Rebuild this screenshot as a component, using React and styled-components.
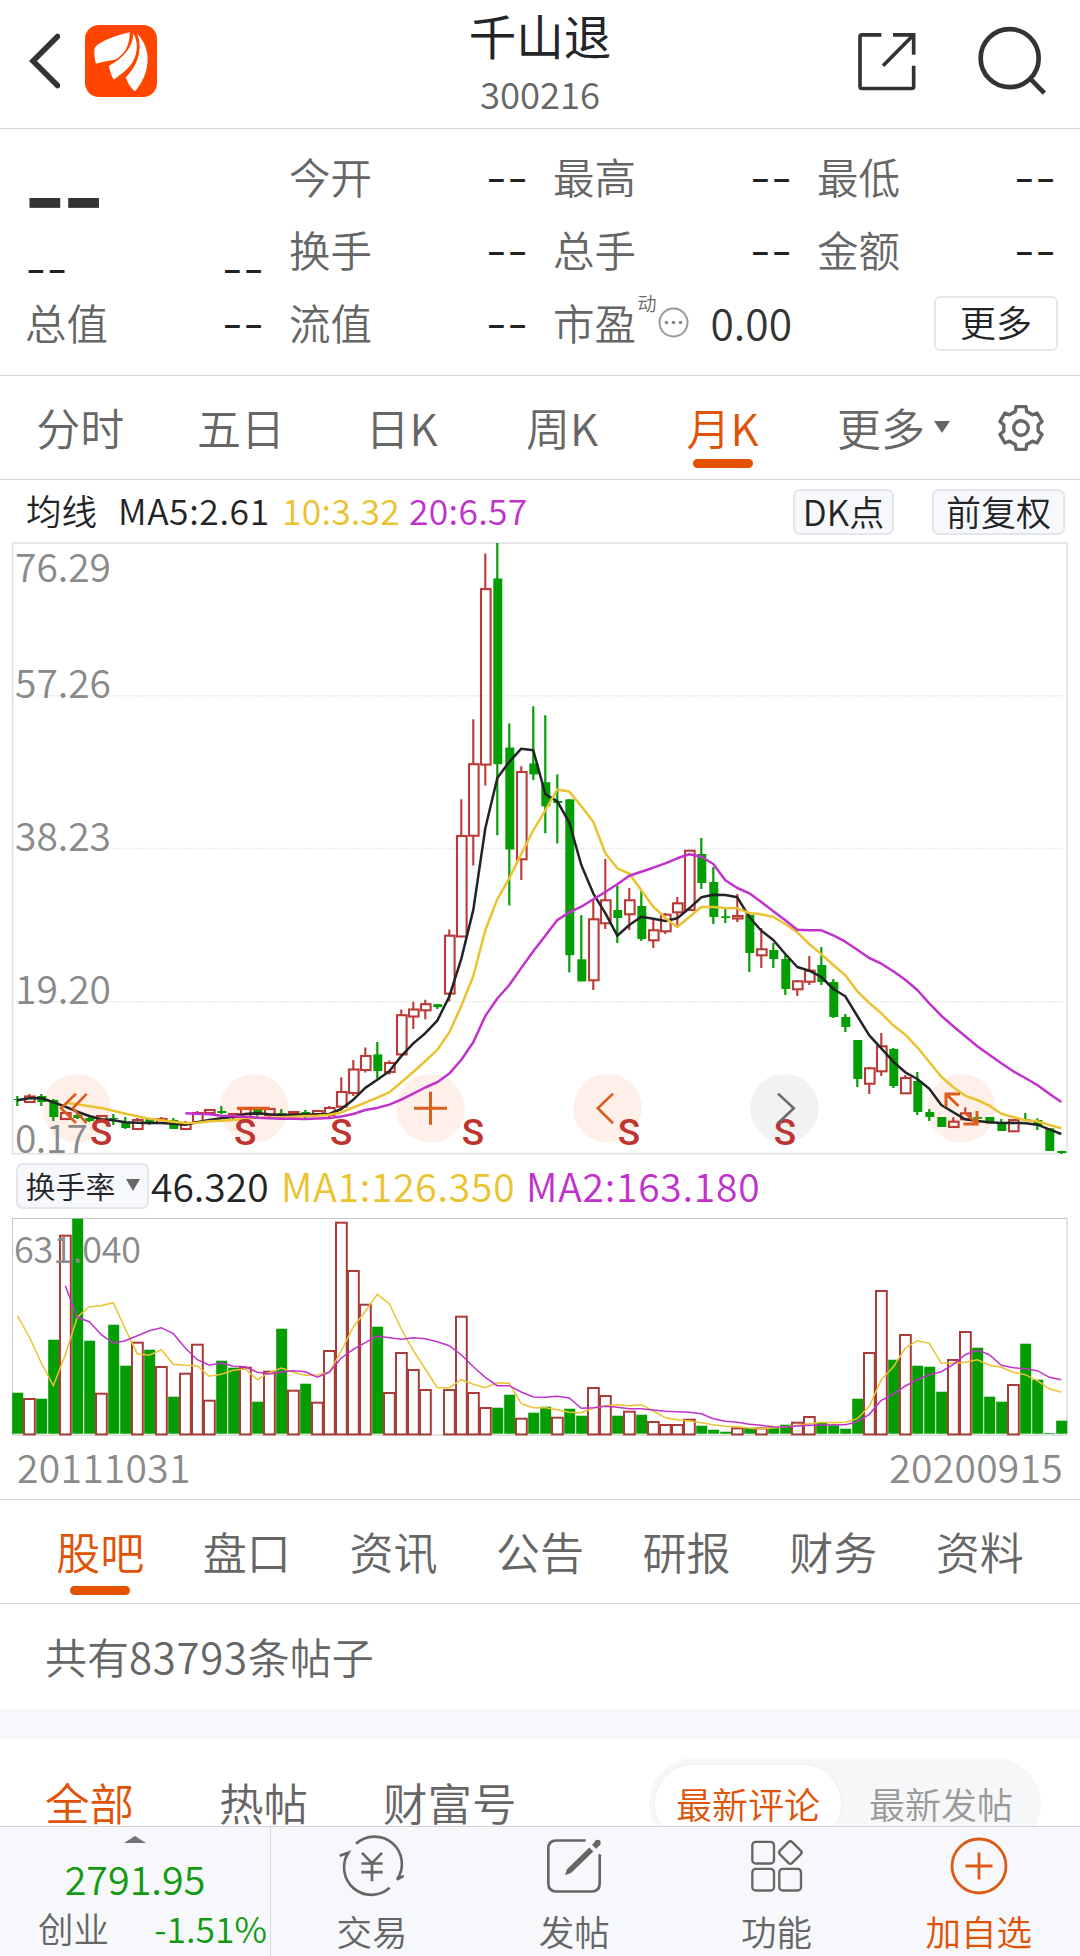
import React from 'react'
import styled, { createGlobalStyle } from 'styled-components'

const RED = '#b93a36'
const GREEN = '#049e04'
const ORANGE = '#e05206'
const INK = '#222426'
const GRAY = '#666'
const YELLOW = '#ebc22f'
const PURPLE = '#c032cb'

const STEP = 12

// [up, high, body top, body bottom, low] in chart pixels
const candles = [
    [0, 553, 556, 557, 563], [1, 551, 553.5, 559, 559], [0, 551, 553, 559, 563], [0, 556, 557, 574, 578],
    [1, 569, 570, 576, 577], [0, 571, 572, 575, 576], [0, 573, 575, 578, 579], [1, 572, 573, 578, 579],
    [0, 571, 575, 576, 582], [0, 574, 579, 585, 586], [1, 575, 577, 586, 586], [0, 575, 576, 580, 582],
    [1, 574, 576, 580, 581], [0, 575, 577, 586, 586], [1, 578, 580, 586, 587], [1, 568, 570, 579, 579],
    [1, 566, 567, 570, 570], [0, 563, 568, 570, 571], [1, 571, 571, 574, 576], [1, 564, 565, 574, 576],
    [0, 564, 566, 572, 576], [1, 565, 566, 572, 574], [0, 566, 570, 572, 572], [1, 569, 569, 571, 572],
    [0, 567, 569, 574, 575], [1, 568, 568, 571, 572], [1, 563, 565, 572, 574], [1, 534.3, 549, 563.7, 564],
    [1, 517, 526.5, 550, 553], [1, 504.5, 513, 527, 529.4], [0, 499, 511.4, 528, 535.5], [1, 517.5, 520, 529, 531.4],
    [1, 466.5, 472.2, 511.4, 511.4], [1, 458.8, 466.5, 473.5, 486], [1, 456.7, 461.2, 467.3, 476.3], [0, 461.2, 461.2, 464.1, 466],
    [1, 386.5, 392.7, 450.6, 458.4], [1, 256.3, 293, 393.5, 393.5], [1, 176.3, 221.2, 292.7, 322.4], [1, 10.6, 46.1, 221.6, 242.4],
    [0, 0, 35.5, 221.2, 292.2], [0, 180.4, 204.5, 306.5, 362.4], [1, 223.3, 229, 316.3, 337.1], [0, 163.3, 220.4, 231.4, 237.1],
    [0, 172.2, 239.2, 263.3, 290.2], [0, 231.4, 258, 260, 300.4], [0, 256.3, 256.3, 412.2, 429.4], [0, 372.2, 416.3, 438.4, 438.4],
    [1, 357, 376.3, 437.3, 447], [1, 316, 357.3, 380.3, 386], [0, 342.7, 367, 375, 400], [1, 345, 357.3, 371.3, 387],
    [0, 347, 363, 396, 398], [1, 377, 387.3, 397.3, 405], [1, 370, 371.7, 388.3, 391], [1, 354, 360.3, 369.3, 383.7],
    [1, 307.3, 307.7, 367, 367.7], [0, 295, 311, 340, 346], [0, 324, 339, 374, 381], [0, 366, 373.3, 375, 380],
    [1, 351, 373, 375.5, 379], [0, 370.3, 372, 410, 429], [1, 385, 406.3, 412.3, 425], [0, 400, 407, 416, 425],
    [0, 412, 416, 446, 452], [1, 437, 438.3, 446.3, 453], [1, 413, 427.7, 438.7, 442], [0, 404, 422, 439, 442],
    [0, 436, 439, 474, 475], [0, 471, 474, 484, 489], [0, 497, 497, 536, 544], [1, 524, 525.3, 540.7, 551],
    [1, 490, 503.3, 528.3, 533], [0, 505, 506, 543, 545], [1, 532, 535, 550.3, 550.7], [0, 529, 538, 569, 572],
    [0, 566, 569, 574, 578], [0, 574, 574, 584, 584], [1, 574.3, 578.7, 584, 584], [1, 564.3, 570.3, 576.3, 577],
    [0, 573.3, 574, 575.7, 577], [0, 574, 574, 580.3, 580.3], [0, 576, 580.3, 588, 588], [1, 576, 577, 588.3, 588.7],
    [0, 570, 576, 577.3, 578], [0, 575.3, 577, 582.3, 587], [0, 585.3, 585.3, 608, 608], [0, 607.7, 608, 610, 611],
]

const priceLines = [
    { color: INK, from: 0, ys: [557.3, 555.3, 555, 559.3, 563.7, 568.7, 573, 576.3, 577.3, 579.3, 579.7, 580, 580, 580.7, 581.7, 579.3, 577, 575.3, 573.7, 571, 570.3, 571.3, 572, 571.7, 571.4, 571.4, 571, 566, 556.7, 544.9, 536.7, 528.2, 513.1, 500.4, 490.2, 477.6, 453.5, 415.9, 366.9, 285.3, 235.1, 218.8, 205.7, 207.3, 251, 258.4, 279.6, 322, 350.6, 370.2, 392.7, 382, 373.7, 375.7, 378, 375.3, 365.3, 354.3, 351.7, 352, 354.3, 374, 387.7, 397, 411, 424, 427.7, 434, 446, 453.3, 473, 492.3, 505.3, 518.7, 529.3, 536, 545.7, 562, 569.3, 576.3, 578, 579.3, 580, 579.7, 580.3, 581.7, 586.3, 591] },
    { color: YELLOW, from: 4, ys: [559.7, 561.3, 563.3, 565, 567.7, 570.7, 573.3, 575.7, 577.3, 578.7, 580, 579.7, 578.3, 577.7, 577, 575.7, 574.7, 574.7, 574.3, 573.7, 573, 572.7, 571.8, 569.4, 564.5, 559.6, 554.7, 549.4, 539.2, 529, 518, 506.9, 489.4, 462.9, 433, 387.3, 356.3, 335.1, 311, 287.3, 267.3, 246.5, 248.6, 263.3, 278.8, 310.2, 325.3, 330.7, 347.3, 363.7, 375, 384, 374, 364, 364, 365, 365.3, 370, 371.3, 374, 381, 389.3, 401, 411.3, 422, 432.3, 448.3, 460, 470.3, 482.3, 491.7, 504.3, 519, 533.7, 544.3, 552.7, 557, 562.7, 570.7, 574, 577.3, 578.3, 582, 585.3] },
    { color: PURPLE, from: 14, ys: [570.3, 570.7, 571.3, 572.7, 573, 573.7, 574.7, 575.3, 575.7, 575.7, 576, 575.5, 575, 573.5, 571, 567, 564.9, 561.6, 556.7, 550.6, 544.5, 539.2, 530.6, 516.7, 499.2, 473.1, 455.5, 442, 424.9, 408.2, 392.7, 377.1, 369.4, 363.7, 356.3, 349, 341.2, 332.7, 328.7, 324.7, 320.3, 315.3, 311.3, 313.7, 321, 337.3, 345, 350.3, 359, 368.3, 377.3, 386.7, 387.3, 387.3, 392.3, 398.7, 406.7, 415, 420.7, 428.3, 436.7, 447, 460.3, 472.7, 483.3, 493.3, 503.3, 511.7, 520.3, 528.3, 535, 542, 550.7, 559] },
]

const volumes = [
    [0, 174.7], [1, 180.3], [0, 180.7], [0, 121.7], [1, 17], [0, 0.7], [0, 122.7], [1, 175], [0, 106.7], [0, 147.7],
    [1, 124], [0, 131.7], [1, 148.3], [0, 178.7], [1, 155], [1, 126], [1, 182], [0, 142.7], [0, 149.7], [1, 149],
    [0, 183.7], [1, 153], [0, 110.7], [1, 172], [0, 165.7], [1, 184], [1, 132.3], [1, 4], [1, 52.3], [1, 86],
    [0, 108.7], [1, 174.3], [1, 134.3], [1, 151.3], [1, 171.3], null, [1, 171.3], [1, 98], [1, 174.3], [1, 189.3],
    [0, 189.7], [0, 176.7], [1, 200], [0, 194.7], [0, 188.7], [1, 199], [0, 190.7], [0, 197.7], [1, 169.3], [1, 177.3],
    [0, 197.7], [1, 193], [0, 196.7], [1, 203.3], [1, 206.3], [1, 206.3], [1, 201], [0, 207.7], [0, 211.7], [0, 213.7],
    [1, 209.7], [0, 209.7], [1, 209.7], [0, 209.3], [0, 206.7], [1, 204], [1, 198.3], [0, 205], [0, 207.3], [0, 210.7],
    [0, 180.7], [1, 134.3], [1, 72.3], [0, 141.7], [1, 116.3], [0, 147.7], [0, 148.7], [0, 173.7], [1, 141.3], [1, 113.3],
    [0, 129.7], [0, 178.7], [0, 183.7], [1, 166.3], [0, 125.7], [0, 161.7], [0, 215], [0, 202.7],
]

const volumeLines = [
    { color: YELLOW, from: 0, ys: [97.7, 119, 145, 167.7, 136.7, 99.3, 88.7, 87.7, 84.7, 111, 135.7, 137.3, 131.7, 146.3, 147.3, 148, 158.3, 156.3, 152.3, 151, 161.7, 154.7, 150, 154.3, 157.3, 157, 154, 133, 109, 93.3, 76.3, 85.7, 111, 132.7, 151, 169.7, 169.7, 161.7, 166.3, 169.7, 164.7, 165.3, 185.7, 189.7, 189.7, 191.7, 194.3, 194.7, 190, 188, 186.7, 187.7, 186.7, 193, 199.7, 201.7, 203, 204.7, 206.7, 208.3, 208.7, 210.3, 210.7, 210, 208.7, 207.3, 205.7, 204.3, 204.7, 204.3, 200.7, 188.3, 161.7, 149, 130, 122.7, 125.3, 145.3, 145.3, 144.3, 141.7, 147.3, 149.3, 154.3, 156.7, 162.7, 170.7, 174.3] },
    { color: PURPLE, from: 4, ys: [67.7, 99.3, 103.7, 116.7, 125.3, 122.7, 117.7, 112.7, 109.7, 115.7, 130, 141.7, 147.3, 144.7, 148.3, 148.7, 154.3, 156, 154, 152.7, 153.7, 159.3, 154.3, 140, 131.3, 124.7, 118, 119.7, 121.3, 119.7, 120.7, 123.7, 127.7, 136.7, 148.7, 159.3, 167.7, 167.7, 174, 179, 179.3, 178.3, 180, 190.3, 189.7, 188.3, 189.3, 190.7, 190.7, 192, 193.3, 193.7, 194.3, 195.7, 200.7, 203.3, 204.3, 206.3, 207.3, 208.7, 209, 208, 207.3, 207.3, 206.7, 206.7, 203.7, 196.3, 182.3, 176.3, 168, 161.7, 156.7, 153.7, 146.3, 136.7, 132, 136.7, 147.3, 149.7, 150.7, 152.7, 159.3, 161.7] },
]

const priceLabels = [
    { text: '76.29', y: 39, w: 96 },
    { text: '57.26', y: 155, w: 96 },
    { text: '38.23', y: 308, w: 96 },
    { text: '19.20', y: 460.5, w: 96 },
    { text: '0.17', y: 609.5, w: 73 },
]

const sellMarks = [89.3, 233.3, 329.3, 461, 617, 773]

const controls = [
    { x: 64.7, d: 'M11.3 -14.5L-3.7 0l15 14.7M22 -14.5L8 0l14 14.7', shift: -12 },
    { x: 242, d: 'M-17 0h33', w: 3.2 },
    { x: 418.5, d: 'M-16.5 0h33M0 -16.5v33', w: 3 },
    { x: 595.5, d: 'M5.5 -14.7L-9.7 0l15.2 15' },
    { x: 772.5, d: 'M-6.5 -14.7L9.3 0l-15.8 15', off: true },
    { x: 949.5, d: 'M-1.5 -14.3h-14v13M-15.5 -14.3l12.5 12M2 15.7h13.5v-13M15.5 15.7l-12.5 -12', w: 3 },
]

const toPoints = ({ from, ys }) => ys.map((y, i) => `${5.3 + (from + i) * STEP},${y}`).join(' ')

const gearPath = () => {
    const points = []
    for (let i = 0; i < 6; i++) {
        const a = 90 + i * 60
        const corners = [[17.5, -19], [22, -13], [22, 13], [17.5, 19]]
        corners.forEach(([r, d]) => {
            const t = ((a + d) * Math.PI) / 180
            points.push(`${(24 + r * Math.cos(t)).toFixed(1)} ${(24 + r * Math.sin(t)).toFixed(1)}`)
        })
    }
    return `M${points.join('L')}Z`
}

const PriceChart = () => (
    <ChartSvg viewBox="0 0 1056 611" $h={611}>
        {[152.7, 305.5, 458.7].map((y) => (
            <line key={y} x1="1" x2="1054" y1={y} y2={y} stroke="#ececec" strokeWidth="1.5" strokeDasharray="2 1" />
        ))}
        <rect x="0.5" y="0" width="1054.5" height="610.7" fill="none" stroke="#e2e2e2" strokeWidth="1.6" />
        {controls.map((c) => (
            <circle key={c.x} cx={c.x} cy="565.3" r="34.3" fill={c.off ? '#f2f2f2' : '#fef0e9'} />
        ))}
        {priceLabels.map((l) => (
            <AxisText key={l.text} x="3" y={l.y} textLength={l.w}>{l.text}</AxisText>
        ))}
        {candles.map(([up, high, top, bottom, low], i) => {
            const x = 5.3 + i * STEP
            return up ? (
                <g key={i} stroke={RED} strokeWidth="2.1" fill="none">
                    <path d={`M${x} ${high}V${top}M${x} ${bottom}V${low}`} />
                    <rect x={x - 4.3} y={top} width="9.6" height={bottom - top} />
                </g>
            ) : (
                <g key={i} fill={GREEN}>
                    <rect x={x - 1.1} y={high} width="2.2" height={low - high} />
                    <rect x={x - 4} y={top} width="9" height={bottom - top} />
                </g>
            )
        })}
        {priceLines.map((l) => (
            <polyline key={l.color} points={toPoints(l)} fill="none" stroke={l.color} strokeWidth="2.5" strokeLinejoin="round" />
        ))}
        {sellMarks.map((x) => (
            <SellMark key={x} x={x} y="601.5">S</SellMark>
        ))}
        {controls.map((c) => (
            <path
                key={c.x}
                d={c.d}
                transform={`translate(${c.x + (c.shift || 0)} 565.3)`}
                fill="none"
                stroke={c.off ? '#6b6b6b' : '#d95d1b'}
                strokeWidth={c.w || 2.6}
            />
        ))}
    </ChartSvg>
)

const VolumeChart = () => (
    <ChartSvg viewBox="0 0 1056 218" $h={218}>
        <rect x="0.5" y="0.5" width="1054.5" height="216.5" fill="none" stroke="#c6c6c6" />
        {volumes.map((v, i) => {
            if (!v) return null
            const [up, top] = v
            return up
                ? <rect key={i} x={i * STEP} y={top + 0.7} width="10.8" height={215.7 - top} fill="#fff" stroke="#a93b39" strokeWidth="2" />
                : <rect key={i} x={i * STEP + 0.2} y={top} width="11" height={215.7 - top} fill={GREEN} />
        })}
        <AxisText x="2" y="45" textLength="127" $size={36}>631.040</AxisText>
        {volumeLines.map((l) => (
            <polyline key={l.color} points={toPoints(l)} fill="none" stroke={l.color} strokeWidth="1.5" />
        ))}
    </ChartSvg>
)

const Dashes = () => <Dash>--</Dash>

const Quote = ({ label, children }) => (
    <QuoteCell>
        <span>{label}</span>
        {children || <Dashes />}
    </QuoteCell>
)

const App = () => (
    <>
        <GlobalStyle />
        <Screen>
            <Header>
                <HeaderSide>
                    <svg width="32" height="60" viewBox="0 0 32 60">
                        <path d="M29.5 5.5L5 30l24.5 24.5" fill="none" stroke="#333" strokeWidth="5.6" strokeLinecap="round" strokeLinejoin="miter" />
                    </svg>
                    <Logo viewBox="196 30 217 217">
                        <rect x="196" y="30" width="217" height="217" rx="42" fill="#ff4500" />
                        <g fill="#fff">
                            <path d="M331 52C285 62 235 82 225 100C222 118 226 135 229 147C250 138 280 139 297 130C322 110 330 85 331 52Z" />
                            <path d="M340 52C339 90 318 125 268 150C270 168 276 185 283 195C303 177 330 165 345 130C358 100 352 72 340 52Z" />
                            <path d="M350 53C362 80 364 115 348 147C338 167 328 177 318 186C325 205 335 222 347 230C368 205 386 170 385 128C383 95 366 66 350 53Z" />
                        </g>
                        <path d="M340 52C338 90 316 126 266 151M350 53C361 80 361 115 345 147C336 165 326 177 317 187" fill="none" stroke="#ff4500" strokeWidth="5" />
                    </Logo>
                </HeaderSide>
                <Title>
                    <h1>千山退</h1>
                    <p>300216</p>
                </Title>
                <HeaderSide $end>
                    <svg width="60" height="62" viewBox="50 45 180 185" fill="none" stroke="#333" strokeWidth="11">
                        <path d="M123 59H65Q59 59 59 65V214Q59 220 65 220H214Q220 220 220 214V152" />
                        <path d="M158 59H220V119M220 59L128 152" />
                    </svg>
                    <svg width="70" height="72" viewBox="410 30 210 215" fill="none" stroke="#333" strokeWidth="14">
                        <circle cx="508" cy="129" r="87" />
                        <path d="M568 189L612 234" />
                    </svg>
                </HeaderSide>
            </Header>

            <QuotePanel>
                <LastPrice>
                    <b>--</b>
                    <div><Dashes /><Dashes /></div>
                </LastPrice>
                <Quote label="今开" />
                <Quote label="最高" />
                <Quote label="最低" />
                <Quote label="换手" />
                <Quote label="总手" />
                <Quote label="金额" />
                <Quote label="总值" />
                <Quote label="流值" />
                <Quote label="市盈">
                    <Sup>动</Sup>
                    <svg width="31" height="31" viewBox="0 0 31 31">
                        <circle cx="15.5" cy="15.5" r="14" fill="none" stroke="#999" strokeWidth="2" />
                        <g fill="#888">
                            <circle cx="8.5" cy="15.5" r="1.8" />
                            <circle cx="15.5" cy="15.5" r="1.8" />
                            <circle cx="22.5" cy="15.5" r="1.8" />
                        </g>
                    </svg>
                    <em>0.00</em>
                </Quote>
                <MoreCell><MoreButton>更多</MoreButton></MoreCell>
            </QuotePanel>

            <PeriodTabs>
                <Period>分时</Period>
                <Period>五日</Period>
                <Period>日K</Period>
                <Period>周K</Period>
                <Period $active>月K</Period>
                <Period $wide>更多<Caret /></Period>
                <svg width="48" height="48" viewBox="0 0 48 48" fill="none" stroke={GRAY} strokeWidth="3.4" strokeLinejoin="round">
                    <path d={gearPath()} />
                    <circle cx="24" cy="24" r="7.3" />
                </svg>
            </PeriodTabs>

            <Legend>
                <LegendText $w={92}>均线</LegendText>
                <LegendText $w={164} $gap={0.6}>MA5:2.61</LegendText>
                <LegendText $w={127} $gap={0.2} $color={YELLOW}>10:3.32</LegendText>
                <LegendText $w={120} $gap={0.3} $color={PURPLE}>20:6.57</LegendText>
                <Chips>
                    <Chip $w={101}>DK点</Chip>
                    <Chip $w={133}>前复权</Chip>
                </Chips>
            </Legend>
            <PriceChart />

            <VolumeLegend>
                <Chip $w={133} $size={30}>换手率<Caret $s={7.5} /></Chip>
                <LegendText $w={130} $big>46.320</LegendText>
                <LegendText $w={245} $big $gap={0.8} $color={YELLOW}>MA1:126.350</LegendText>
                <LegendText $w={245} $big $gap={0.8} $color={PURPLE}>MA2:163.180</LegendText>
            </VolumeLegend>
            <VolumeChart />
            <Dates>
                <span>20111031</span>
                <span>20200915</span>
            </Dates>

            <SectionTabs>
                <Section $active>股吧</Section>
                <Section>盘口</Section>
                <Section>资讯</Section>
                <Section>公告</Section>
                <Section>研报</Section>
                <Section>财务</Section>
                <Section>资料</Section>
            </SectionTabs>
            <PostCount>共有<span>83793</span>条帖子</PostCount>
            <Filters>
                <Filter $active>全部</Filter>
                <Filter>热帖</Filter>
                <Filter>财富号</Filter>
                <Switch>
                    <SwitchItem $on>最新评论</SwitchItem>
                    <SwitchItem>最新发帖</SwitchItem>
                </Switch>
            </Filters>

            <BottomBar>
                <IndexBox>
                    <UpArrow />
                    <strong>2791.95</strong>
                    <IndexRow>
                        <span>创业</span>
                        <i>-1.51%</i>
                    </IndexRow>
                </IndexBox>
                <Action>
                    <svg width="70" height="62" viewBox="50 45 210 185" fill="none" stroke={GRAY} strokeWidth="8">
                        <path d="M107 71A82 82 0 0 1 230 178L250 167" />
                        <path d="M208 203A82 82 0 0 1 84 98L58 107" />
                        <path d="M125 98L155 129L185 98M155 129V183M123 130H187M123 156H187" />
                    </svg>
                    交易
                </Action>
                <Action>
                    <svg width="70" height="62" viewBox="657 45 210 185" fill="none" stroke={GRAY} strokeWidth="8">
                        <path d="M797 61H709Q685 61 685 85V190Q685 214 709 214H815Q839 214 839 190V106L842 103" />
                        <path d="M808 82L820 94L754 158L735 165L741 147Z" fill={GRAY} stroke="none" />
                        <path d="M822 80L833 69" strokeWidth="17" />
                        <circle cx="833" cy="68" r="9" fill={GRAY} stroke="none" />
                    </svg>
                    发帖
                </Action>
                <Action>
                    <svg width="70" height="62" viewBox="1264 45 210 185" fill="none" stroke={GRAY} strokeWidth="7">
                        <rect x="1295" y="65" width="65" height="65" rx="10" />
                        <rect x="1295" y="146" width="65" height="65" rx="10" />
                        <rect x="1376" y="146" width="65" height="65" rx="10" />
                        <rect x="1383" y="71" width="52" height="52" rx="8" transform="rotate(45 1409 97)" />
                    </svg>
                    功能
                </Action>
                <Action $active>
                    <svg width="70" height="62" viewBox="0 0 70 62" fill="none" stroke="#dd5a14" strokeWidth="2.8">
                        <circle cx="35" cy="31" r="27" />
                        <path d="M21.5 31h27M35 17.5v27" />
                    </svg>
                    加自选
                </Action>
            </BottomBar>
        </Screen>
    </>
)

const GlobalStyle = createGlobalStyle`
    * {
        box-sizing: border-box;
        margin: 0;
        padding: 0;
    }
    body {
        background: #fff;
        font-family: "Noto Sans CJK SC", "Noto Sans", sans-serif;
        font-weight: 350;
    }
    svg {
        display: block;
        flex: none;
    }
`

const Screen = styled.div`
    width: 1080px;
    height: 1956px;
    overflow: hidden;
    display: flex;
    flex-direction: column;
    color: ${INK};
    > * {
        flex: none;
    }
`

const Header = styled.header`
    height: 129px;
    border-bottom: 1px solid #d6d6d6;
    display: grid;
    grid-template-columns: 1fr 300px 1fr;
`

const HeaderSide = styled.div`
    display: flex;
    height: 122px;
    align-items: center;
    padding-left: 28px;
    gap: 25px;
    ${({ $end }) => $end && `
        justify-content: flex-end;
        gap: 60px;
        padding: 0 33px 0 0;
    `}
`

const Logo = styled.svg`
    width: 72px;
    height: 72px;
`

const Title = styled.div`
    text-align: center;
    h1 {
        font-size: 47.5px;
        line-height: 56px;
        font-weight: 400;
        padding-top: 7px;
    }
    p {
        font-size: 36.5px;
        line-height: 61px;
        color: ${GRAY};
    }
`

const QuotePanel = styled.section`
    height: 247px;
    padding: 12px 27px 0 25px;
    border-bottom: 1px solid #d6d6d6;
    display: grid;
    grid-template-columns: repeat(4, 236px);
    grid-auto-rows: 73px;
    column-gap: 28px;
`

const LastPrice = styled.div`
    grid-row: span 2;
    display: flex;
    flex-direction: column;
    b {
        height: 104px;
        font: 600 94px/104px Inter, sans-serif;
        letter-spacing: -5px;
        padding-top: 4px;
        margin-left: -2px;
        color: #333;
    }
    div {
        display: flex;
        justify-content: space-between;
        height: 50px;
        line-height: 48px;
        margin-right: -3px;
    }
`

const Dash = styled.span`
    font-family: Inter, sans-serif;
    font-size: 48px;
    font-weight: 300;
    letter-spacing: -0.5px;
    color: #222;
`

const QuoteCell = styled.div`
    display: flex;
    align-items: center;
    justify-content: space-between;
    font-size: 41.5px;
    line-height: 70px;
    padding-bottom: 3px;
    color: ${GRAY};
    white-space: nowrap;
    ${Dash} {
        padding-top: 4px;
        margin-right: -3px;
    }
    em {
        font-style: normal;
        color: #333;
        font-size: 42.5px;
        margin-right: -3px;
    }
`

const Sup = styled.sup`
    font-size: 19px;
    line-height: 20px;
    align-self: flex-start;
    margin: 6px -20px 0 -20px;
`

const MoreCell = styled.div`
    display: flex;
    align-items: center;
    justify-content: flex-end;
    margin-right: -5px;
`

const MoreButton = styled.button`
    width: 124px;
    height: 55px;
    border: 2px solid #e6e7e9;
    border-radius: 6px;
    background: #fff;
    font: inherit;
    font-size: 36px;
    line-height: 45px;
    padding-bottom: 4px;
    color: ${INK};
`

const PeriodTabs = styled.nav`
    height: 104px;
    border-bottom: 1px solid #d6d6d6;
    display: flex;
    align-items: center;
`

const underline = `
    &::after {
        content: '';
        position: absolute;
        bottom: 0;
        left: calc(50% - 30px);
        width: 60px;
        height: 9px;
        border-radius: 5px;
        background: #e65100;
    }
`

const Period = styled.div`
    position: relative;
    width: ${({ $wide }) => ($wide ? '194px' : '160.6px')};
    padding-left: ${({ $wide }) => ($wide ? '34px' : 0)};
    padding-bottom: 4px;
    height: 78px;
    margin-top: 3px;
    display: flex;
    align-items: center;
    justify-content: ${({ $wide }) => ($wide ? 'flex-start' : 'center')};
    gap: 9px;
    font-size: 44px;
    line-height: 60px;
    color: ${({ $active }) => ($active ? ORANGE : GRAY)};
    ${({ $active }) => $active && underline}
`

const Caret = styled.i`
    border: ${({ $s }) => $s || 8}px solid transparent;
    border-top: 12px solid #666;
    border-bottom: 0;
`

const Legend = styled.div`
    height: 63px;
    padding: 0 15px 0 26px;
    display: flex;
    align-items: center;
`

const LegendText = styled.span`
    width: ${({ $w }) => $w}px;
    font-size: ${({ $big }) => ($big ? 39 : 35.5)}px;
    line-height: 50px;
    padding-bottom: 3px;
    letter-spacing: ${({ $gap }) => $gap || 0}px;
    white-space: nowrap;
    color: ${({ $color }) => $color || INK};
`

const Chips = styled.div`
    margin-left: auto;
    display: flex;
    gap: 38px;
`

const Chip = styled.div`
    width: ${({ $w }) => $w}px;
    height: 46px;
    border: 2px solid #e3e6ea;
    border-radius: 7px;
    background: #f6f8fb;
    display: flex;
    align-items: center;
    justify-content: center;
    gap: 10px;
    padding-bottom: 2px;
    white-space: nowrap;
    font-size: ${({ $size }) => $size || 35}px;
    line-height: 38px;
`

const ChartSvg = styled.svg`
    width: 1056px;
    height: ${({ $h }) => $h}px;
    margin: 0 12px;
    overflow: visible;
`

const AxisText = styled.text`
    font-size: ${({ $size }) => $size || 39}px;
    fill: #8a8a8a;
`

const SellMark = styled.text`
    font-family: Roboto, sans-serif;
    font-size: 37px;
    font-weight: 500;
    text-anchor: middle;
    fill: #bf3330;
`

const VolumeLegend = styled(Legend)`
    height: 64px;
    padding: 0 16px;
    ${Chip} {
        margin-right: 2px;
    }
`

const Dates = styled.div`
    height: 64px;
    border-bottom: 1px solid #d6d6d6;
    padding: 0 17px;
    display: flex;
    justify-content: space-between;
    font-size: 39px;
    line-height: 61px;
    letter-spacing: 0.3px;
    color: #8a8a8a;
`

const SectionTabs = styled.nav`
    height: 104px;
    border-bottom: 1px solid #d6d6d6;
    padding: 0 27px;
    display: flex;
    align-items: flex-start;
`

const Section = styled.div`
    position: relative;
    flex: 1;
    height: 95px;
    text-align: center;
    font-size: 44px;
    line-height: 103px;
    color: ${({ $active }) => ($active ? ORANGE : GRAY)};
    ${({ $active }) => $active && underline}
`

const PostCount = styled.div`
    height: 135px;
    padding: 0 45px;
    border-bottom: 30px solid #f6f8fb;
    font-size: 42px;
    line-height: 104px;
    color: ${GRAY};
    span {
        letter-spacing: 0.7px;
    }
`

const Filters = styled.div`
    height: 87px;
    overflow: hidden;
    padding: 19px 39px 0 45px;
    display: flex;
    align-items: flex-start;
`

const Filter = styled.span`
    font-size: 44.5px;
    line-height: 88px;
    margin-right: 85px;
    color: ${({ $active }) => ($active ? ORANGE : GRAY)};
    & + & {
        margin-right: 75px;
    }
`

const Switch = styled.div`
    width: 392px;
    height: 91px;
    margin-left: auto;
    padding: 7px 6px;
    border-radius: 46px;
    background: #f6f7f9;
    display: flex;
`

const SwitchItem = styled.div`
    flex: none;
    width: ${({ $on }) => ($on ? 186 : 200)}px;
    height: 77px;
    border-radius: 39px;
    background: ${({ $on }) => ($on ? '#fff' : 'none')};
    box-shadow: ${({ $on }) => ($on ? '0 0 4px rgba(0, 0, 0, 0.05)' : 'none')};
    text-align: center;
    font-size: 36px;
    line-height: 76px;
    color: ${({ $on }) => ($on ? ORANGE : '#999')};
`

const BottomBar = styled.footer`
    height: 130px;
    border-top: 1px solid #d2d4d6;
    background: #f6f8fb;
    display: flex;
`

const IndexBox = styled.div`
    width: 271px;
    border-right: 1px solid #d6d8da;
    display: flex;
    flex-direction: column;
    align-items: center;
    color: #129a12;
    strong {
        font-size: 39.5px;
        font-weight: 350;
        line-height: 54px;
        margin-top: 8px;
    }
`

const UpArrow = styled.i`
    border: 11px solid transparent;
    border-top: 0;
    border-bottom: 7px solid #707274;
    margin-top: 9px;
`

const IndexRow = styled.div`
    align-self: stretch;
    display: flex;
    justify-content: space-between;
    padding: 0 3px 0 38px;
    font-size: 35.5px;
    line-height: 46px;
    span {
        color: ${GRAY};
    }
    i {
        font-style: normal;
    }
`

const Action = styled.div`
    flex: 1;
    display: flex;
    flex-direction: column;
    align-items: center;
    padding-top: 8px;
    font-size: 35.5px;
    line-height: 68px;
    color: ${({ $active }) => ($active ? ORANGE : GRAY)};
`

export default App
